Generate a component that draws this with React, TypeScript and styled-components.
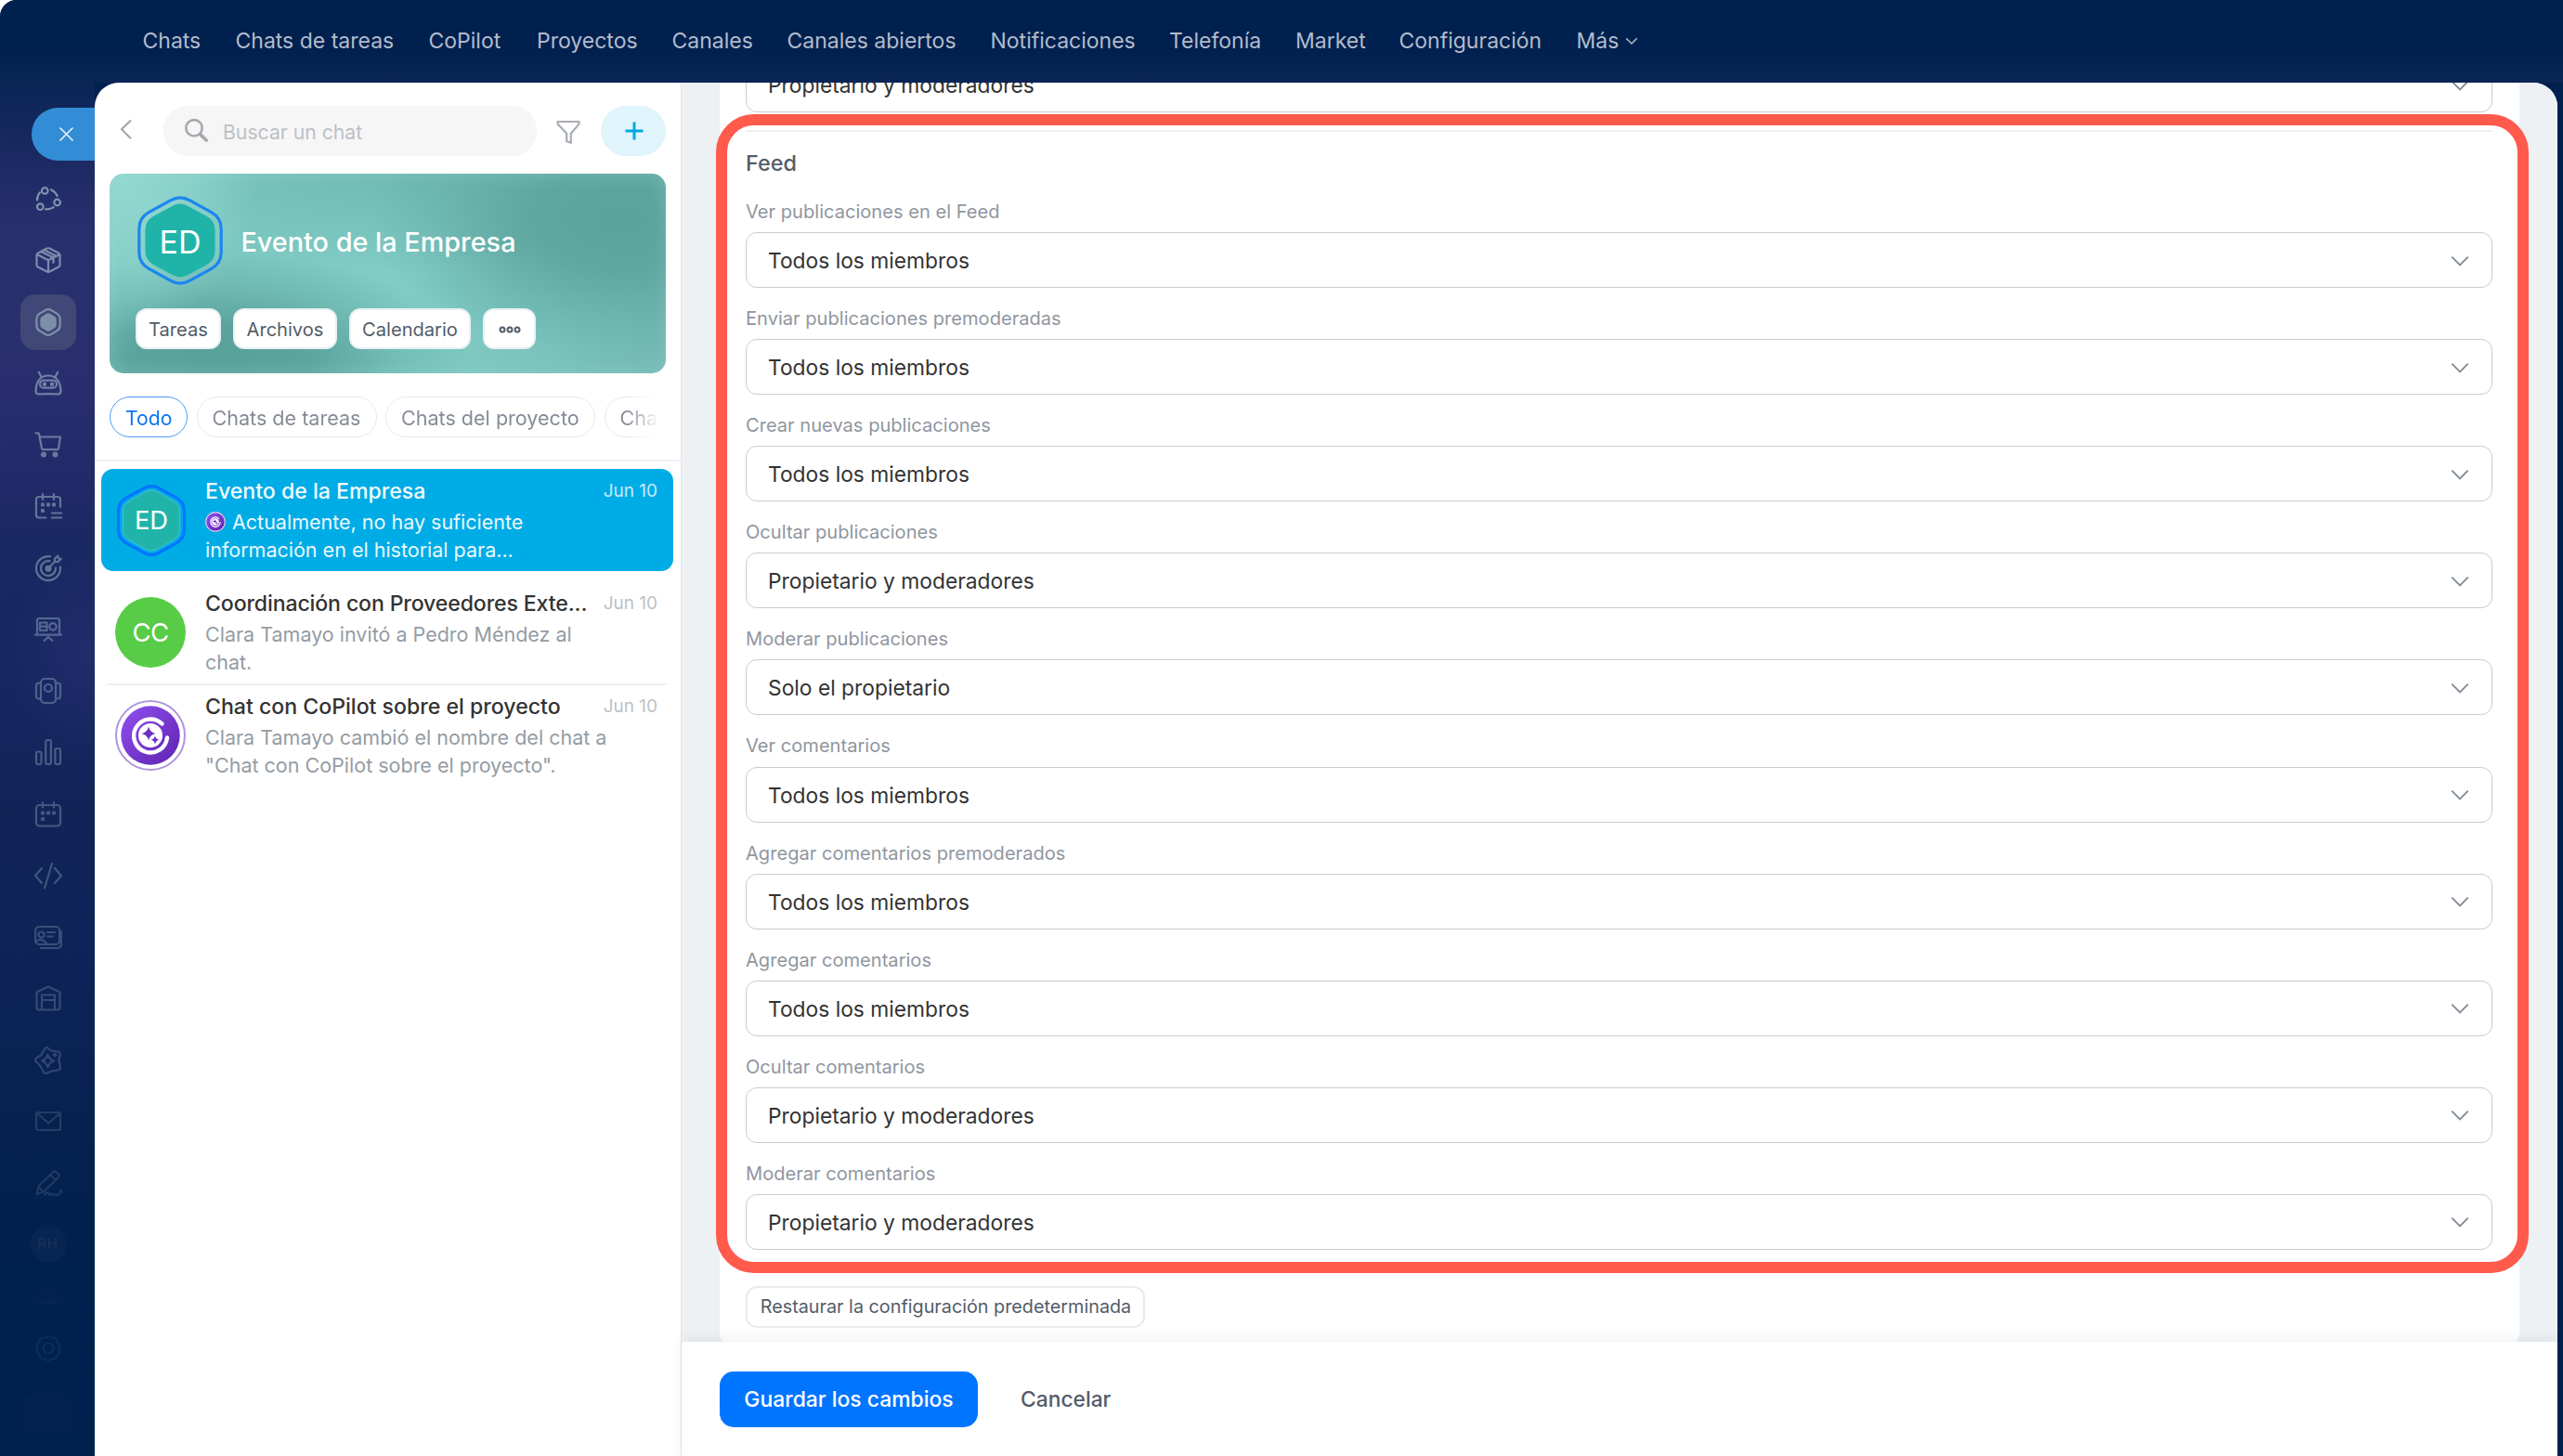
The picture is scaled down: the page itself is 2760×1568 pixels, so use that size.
import React from 'react';
import styled, { createGlobalStyle, css } from 'styled-components';

const Global = createGlobalStyle`
  *, *::before, *::after { box-sizing: border-box; }
  body { margin: 0; background: #fff; }
`;

/* ---------- shell ---------- */

const Page = styled.div`
  width: 2760px;
  height: 1568px;
  overflow: hidden;
  display: grid;
  grid-template-rows: 89px 1fr;
  border-top-left-radius: 18px;
  background: #00204f;
  font-family: Inter, 'Liberation Sans', sans-serif;
  color: #333;
`;

const TopBar = styled.nav`
  display: flex;
  align-items: center;
  padding: 0 0 2px 153.5px;
  background: linear-gradient(to bottom, #00204d 0%, #00204f 58%, #0a2556 100%);
`;

const TopLink = styled.a<{ $w?: number }>`
  display: flex;
  align-items: center;
  gap: 7px;
  flex: none;
  width: ${p => (p.$w ? `${p.$w}px` : 'auto')};
  font-size: 23px;
  line-height: 30px;
  color: #b2bccb;
  white-space: nowrap;
`;

const Body = styled.div`
  display: grid;
  grid-template-columns: 102px 2652px 6px;
  min-height: 0;
`;

/* ---------- rail ---------- */

const Rail = styled.aside`
  display: flex;
  flex-direction: column;
  padding-top: 27px;
  min-height: 0;
  overflow: hidden;
  background:
    radial-gradient(ellipse 80px 120px at 92px 620px, rgba(44, 50, 120, 0.45), rgba(44, 50, 120, 0)),
    linear-gradient(to bottom, #0a2556 0, #1d2a64 90px, #27306d 150px, #292f6e 320px, #222a6a 420px, #192961 500px, #152761 640px, #112458 780px, #0d2358 960px, #06214f 1130px, #00204e 1280px, #00204d 100%);
`;

const CloseTab = styled.button`
  align-self: flex-end;
  width: 68px;
  height: 57px;
  margin-bottom: 8px;
  padding: 0 0 0 7px;
  border: 0;
  border-radius: 29px 0 0 29px;
  background: #338cd6;
  display: flex;
  align-items: center;
  justify-content: center;
  flex: none;
`;

const Slot = styled.div<{ $fade: number }>`
  height: 66.25px;
  flex: none;
  display: flex;
  align-items: center;
  justify-content: center;
  padding-left: 1px;
  color: #a6bdcb;
  & > svg { opacity: ${p => p.$fade}; }
`;

const ActiveTile = styled.div`
  width: 60px;
  height: 60px;
  border-radius: 16px;
  background: #404877;
  display: flex;
  align-items: center;
  justify-content: center;
  & > svg { opacity: 0.6; }
`;

const Initials = styled.div`
  width: 40px;
  height: 40px;
  border-radius: 50%;
  background: #072452;
  color: #173259;
  font-size: 15.5px;
  line-height: 40px;
  text-align: center;
  letter-spacing: 0.4px;
  font-weight: 500;
  flex: none;
`;

const CutSlot = styled.div`
  height: 30px;
  flex: none;
  overflow: hidden;
  padding-top: 14px;
  display: flex;
  justify-content: center;
  opacity: 0.55;
`;

const GearSlot = styled(Slot)`
  height: 97px;
`;

const GhostTile = styled.div`
  width: 54px;
  height: 43px;
  margin-left: 24px;
  border-radius: 12px;
  background: #03224f;
  flex: none;
`;

/* ---------- chat list ---------- */

const Sheet = styled.div`
  display: grid;
  grid-template-columns: 632px 1fr;
  border-radius: 26px 26px 0 0;
  overflow: hidden;
  background: #fff;
  min-height: 0;
`;

const ListPane = styled.section`
  border-right: 1px solid #e1e5e8;
  padding-top: 25px;
  display: flex;
  flex-direction: column;
`;

const SearchRow = styled.div`
  display: flex;
  align-items: center;
  height: 54px;
  padding-left: 20px;
`;

const SearchBox = styled.div`
  display: flex;
  align-items: center;
  gap: 14px;
  width: 402px;
  height: 54px;
  margin: 0 19px 0 26px;
  padding-left: 22px;
  border-radius: 26px;
  background: #f6f6f7;
  color: #bcc0c5;
  font-size: 21.2px;
  & > span { padding-top: 2px; }
`;

const AddButton = styled.button`
  width: 70px;
  height: 54px;
  margin-left: 20px;
  padding: 0 0 0 1px;
  border: 0;
  border-radius: 27px;
  background: #dff4fb;
  display: flex;
  align-items: center;
  justify-content: center;
`;

const Hero = styled.div`
  width: 599px;
  height: 215px;
  margin: 19px 0 0 16px;
  padding: 24px 28px;
  border-radius: 15px;
  box-shadow: inset 0 0 18px rgba(160, 215, 208, 0.35);
  background:
    radial-gradient(ellipse 150px 170px at 10px 0px, rgba(150, 219, 211, 0.9), rgba(150, 219, 211, 0.55) 50%, rgba(150, 219, 211, 0)),
    radial-gradient(ellipse 270px 150px at 550px 50px, #5aa29c 0%, rgba(90, 162, 156, 0.85) 35%, rgba(90, 162, 156, 0.35) 70%, rgba(90, 162, 156, 0)),
    radial-gradient(ellipse 290px 110px at 330px -5px, rgba(97, 172, 165, 0.6), rgba(97, 172, 165, 0.3) 50%, rgba(97, 172, 165, 0)),
    radial-gradient(ellipse 270px 120px at 120px 205px, #58a09a 0%, rgba(88, 160, 154, 0.9) 35%, rgba(88, 160, 154, 0.35) 70%, rgba(88, 160, 154, 0)),
    linear-gradient(100deg, #79c3bd 0%, #82cdc7 55%, #74b9b3 100%);
`;

const HeroHead = styled.div`
  display: flex;
  align-items: center;
  gap: 20px;
  height: 96px;
  padding-left: 1.5px;
`;

const HeroTitle = styled.h1`
  margin: 0;
  padding-top: 3px;
  font-size: 28.8px;
  font-weight: 500;
  color: #fff;
`;

const HeroActions = styled.div`
  display: flex;
  gap: 13px;
  margin-top: 25px;
`;

const HeroButton = styled.button<{ $w: number }>`
  width: ${p => p.$w}px;
  height: 44px;
  padding: 1px 0 0;
  border: 2px solid #e9f1f3;
  border-radius: 12px;
  background: #fff;
  font: 400 20.1px Inter, 'Liberation Sans', sans-serif;
  color: #525c69;
  display: flex;
  align-items: center;
  justify-content: center;
`;

const Tabs = styled.div`
  display: flex;
  gap: 9.5px;
  width: 592px;
  margin: 25px 0 0 16px;
  overflow: hidden;
  mask-image: linear-gradient(to right, #000 556px, transparent 592px);
`;

const Tab = styled.button<{ $w: number; $on?: boolean }>`
  flex: none;
  width: ${p => p.$w}px;
  height: 44px;
  padding: 1px 0 0 16px;
  border: 1.5px solid ${p => (p.$on ? '#4b9bf5' : '#e8eaed')};
  border-radius: 22px;
  background: #fff;
  color: ${p => (p.$on ? '#0f75f0' : '#858c96')};
  font: 400 ${p => (p.$on ? 21.2 : 21.55)}px Inter, 'Liberation Sans', sans-serif;
  text-align: left;
`;

const PaneRule = styled.div`
  height: 2px;
  margin: 24px 0 8px;
  background: #f0f0f3;
`;

const ChatRow = styled.article<{ $active?: boolean }>`
  display: flex;
  align-items: center;
  height: 110px;
  width: 616px;
  margin-left: 7px;
  padding: 0 17px 0 15px;
  border-radius: 13px;
  ${p => p.$active && css`
    background: #00ace6;
    margin-bottom: 11px;
  `}
  --title: ${p => (p.$active ? '#f4fcff' : '#333')};
  --message: ${p => (p.$active ? '#e9f8fd' : '#959ca4')};
  --date: ${p => (p.$active ? '#c5ebf9' : '#bdc1c6')};
`;

const AvatarBox = styled.div`
  width: 76px;
  height: 76px;
  margin-right: 21px;
  flex: none;
  display: flex;
  align-items: center;
  justify-content: center;
`;

const HexBox = styled(AvatarBox)`
  padding-left: 2px;
`;

const RoundAvatar = styled(AvatarBox)`
  border-radius: 50%;
  background: #58cc47;
  color: #fff;
  font-size: 27.5px;
  letter-spacing: -0.5px;
`;

const RowText = styled.div`
  flex: 1;
  min-width: 0;
  padding-top: 1px;
`;

const RowHead = styled.div`
  display: flex;
  justify-content: space-between;
  align-items: center;
  height: 30px;
  margin-bottom: 3.5px;
`;

const RowTitle = styled.h2<{ $tight?: boolean }>`
  margin: 0;
  font-size: 23.1px;
  font-weight: 500;
  line-height: 30px;
  letter-spacing: ${p => (p.$tight ? '-0.13px' : '0')};
  white-space: nowrap;
  color: var(--title);
`;

const RowDate = styled.time`
  font-size: 19px;
  line-height: 28px;
  color: var(--date);
`;

const Message = styled.p`
  margin: 0;
  font-size: 21.5px;
  line-height: 30px;
  color: var(--message);
  white-space: nowrap;
`;

const MessageLine = styled.span`
  display: flex;
  align-items: center;
  gap: 7px;
`;

const RowRule = styled.div`
  height: 2px;
  width: 602px;
  margin: 0 0 -1px 14px;
  background: #efefef;
`;

/* ---------- settings ---------- */

const Main = styled.main`
  display: flex;
  flex-direction: column;
  min-height: 0;
`;

const Scroll = styled.div`
  position: relative;
  height: 1356px;
  flex: none;
  overflow: hidden;
  padding-left: 41px;
  background: #edf1f4;
`;

const Card = styled.div`
  width: 1938px;
  height: 1387px;
  margin-top: -28px;
  padding: 0 29px 0 28px;
  border-radius: 12px;
  background: #fff;
`;

const SelectBox = styled.div`
  display: flex;
  align-items: center;
  justify-content: space-between;
  height: 60px;
  padding: 1px 22px 0 23px;
  border: 1.5px solid #c8cbcf;
  border-radius: 12px;
  background: #fff;
  font-size: 22.8px;
  color: #333;
`;

const SectionRule = styled.div`
  height: 2px;
  margin: 19px 0;
  background: #efefef;
`;

const SectionTitle = styled.h3`
  margin: 0 0 25px;
  font-size: 23.4px;
  line-height: 30px;
  font-weight: 500;
  color: #525c69;
`;

const Field = styled.div`
  margin-bottom: 21px;
`;

const FieldLabel = styled.label`
  display: block;
  margin-bottom: 10.1px;
  font-size: 20.1px;
  line-height: 24px;
  color: #8f969f;
`;

const ResetButton = styled.button`
  width: 430px;
  height: 45px;
  margin-top: 18px;
  padding: 0 0 0 1px;
  border: 2px solid #e9ebed;
  border-radius: 12px;
  background: #fff;
  font: 400 19.8px Inter, 'Liberation Sans', sans-serif;
  color: #525c69;
`;

const Highlight = styled.div`
  position: absolute;
  left: 37px;
  top: 34px;
  width: 1952px;
  height: 1248px;
  border: 12px solid #ff5a4c;
  border-radius: 41px;
`;

const Footer = styled.footer`
  position: relative;
  flex: 1;
  display: flex;
  align-items: center;
  padding-left: 41px;
  gap: 46px;
  background: #fff;
  box-shadow: 0 -2px 14px rgba(60, 70, 80, 0.09);
`;

const SaveButton = styled.button`
  width: 278px;
  height: 60px;
  padding: 0;
  border: 0;
  border-radius: 15px;
  background: #0075ff;
  color: #fff;
  font: 500 22.9px Inter, 'Liberation Sans', sans-serif;
`;

const CancelButton = styled.button`
  padding: 0;
  border: 0;
  background: none;
  color: #525c69;
  font: 500 22.8px Inter, 'Liberation Sans', sans-serif;
`;

/* ---------- drawings ---------- */

function hexPath(cx: number, cy: number, w: number, r: number, d: number) {
  const pts = [[0, -r], [w, -r / 2], [w, r / 2], [0, r], [-w, r / 2], [-w, -r / 2]].map(([x, y]) => [cx + x, cy + y]);
  const toward = (a: number[], b: number[]) => {
    const l = Math.hypot(b[0] - a[0], b[1] - a[1]);
    return `${a[0] + ((b[0] - a[0]) * d) / l} ${a[1] + ((b[1] - a[1]) * d) / l}`;
  };
  return pts.map((p, i) => {
    const prev = pts[(i + 5) % 6];
    const next = pts[(i + 1) % 6];
    return `${i ? 'L' : 'M'}${toward(p, prev)}Q${p[0]} ${p[1]} ${toward(p, next)}`;
  }).join('') + 'Z';
}

const HexAvatar = ({ small }: { small?: boolean }) => (
  <svg width={small ? 74 : 92} height={small ? 77 : 96} viewBox="0 0 92 96">
    <path d={hexPath(46, 48, 44.2, 49, 12)} fill="none" stroke={small ? '#0075ff' : '#1a86f0'} strokeWidth={small ? 4 : 3.2} />
    <path d={hexPath(46, 48, small ? 38.2 : 37.6, small ? 43 : 42, 10)} fill="#20b4a9" stroke={small ? '#5cc4cf' : 'none'} strokeWidth="1" />
    <text x="46" y={small ? 60 : 61.5} textAnchor="middle" fill="#fff" fontSize="34" fontFamily="Inter, sans-serif">ED</text>
  </svg>
);

const CopilotMark = ({ size }: { size: number }) => (
  <svg width={size} height={size} viewBox="0 0 76 76">
    <defs>
      <linearGradient id={`cp${size}`} x1="0" y1="0" x2="1" y2="1">
        <stop offset="0" stopColor="#9050ee" />
        <stop offset="1" stopColor="#5f23b0" />
      </linearGradient>
    </defs>
    <circle cx="38" cy="38" r="37" fill="#fff" stroke="#b096dc" strokeWidth="2" />
    <circle cx="38" cy="38" r={size < 30 ? 34 : 31.7} fill={`url(#cp${size})`} />
    <path d="M50.5 25.4A18 18 0 1 0 56 40.5" fill="none" stroke="#fff" strokeWidth="4.4" strokeLinecap="round" />
    <circle cx="38" cy="38" r="13" fill="#fff" />
    <path d="M36 28.5q1.3 6.2 7.5 7.5q-6.2 1.3-7.5 7.5q-1.3-6.2-7.5-7.5q6.2-1.3 7.5-7.5zM43 38.3q.8 3.7 4.6 4.5q-3.8.8-4.6 4.6q-.8-3.8-4.6-4.6q3.8-.8 4.6-4.5z" fill="#6d30c4" />
  </svg>
);

const Glyph = ({ children }: { children: React.ReactNode }) => (
  <svg width="30" height="30" viewBox="0 0 30 30" fill="none" stroke="currentColor" strokeWidth="2.2" strokeLinecap="round" strokeLinejoin="round">
    {children}
  </svg>
);

const Chevron = () => (
  <svg width="24" height="24" viewBox="0 0 24 24" fill="none" stroke="#828b95" strokeWidth="1.9">
    <path d="M3.3 7.6l8.7 8.7l8.7-8.7" />
  </svg>
);

const dots = (pts: number[][]) => pts.map(([x, y]) => <rect key={`${x}-${y}`} x={x - 2} y={y - 2} width="4" height="4" rx="1" fill="currentColor" stroke="none" />);

const railIcons: [number, React.ReactNode][] = [
  [0.7, <>
    <circle cx="11.3" cy="6.4" r="3.3" /><circle cx="24.6" cy="19" r="3.3" /><circle cx="6.3" cy="23.7" r="3.3" />
    <path d="M3 16.5Q3 11.5 6 8.3M18 5.2Q22.5 7.3 24.7 12M12 26.3Q17 26.8 20.7 24.2" />
  </>],
  [0.66, <>
    <path d="M13.6 2.6q1.4-.7 2.8 0l9.7 5q1.4.8 1.4 2.2v10.6q0 1.4-1.4 2.2l-9.7 5q-1.4.7-2.8 0l-9.7-5q-1.4-.8-1.4-2.2V9.8q0-1.4 1.4-2.2z" />
    <path d="M3 9l12 6.300l12-6.300M15 15.300V28M7.300 6l13.200 6.600v5.200M10.700 4.200L24 11" />
  </>],
  [-1, <>
    <path d={hexPath(15, 15, 12.6, 14.8, 4)} />
    <path d={hexPath(15, 15, 7.6, 9, 1.6)} fill="currentColor" />
  </>],
  [0.58, <>
    <path d="M1.600 23.500C1.600 13 6.500 6.500 15 6.500S28.400 13 28.400 23.500q0 3-3.200 3q-10.200-.9-20.400 0q-3.200 0-3.200-3zM4.800 2.800l2.600 5M25.200 2.800l-2.600 5" />
    <rect x="6" y="11.700" width="18" height="8" rx="4" />
    {dots([[11, 15.700], [19, 15.700]])}
  </>],
  [0.54, <>
    <path d="M1.500 2.300h2.300q1 0 1.200 1l3 15.700q.2 1.200 1.400 1.200h15.200q1.200 0 1.400-1.200l2-12.500H5.500" />
    <circle cx="10" cy="25.600" r="1.900" fill="currentColor" /><circle cx="22.400" cy="25.600" r="1.900" fill="currentColor" />
  </>],
  [0.5, <>
    <path d="M12.500 27.500H5q-3 0-3-3V8q0-3 3-3h20q3 0 3 3v8M9 2v6M21 2v6M19 22.500h10.500M19 27.500h10.500" />
    {dots([[9, 13.500], [15, 13.500], [21, 13.500], [9, 20]])}
  </>],
  [0.5, <>
    <path d="M17 2.200A13 13 0 1 0 27.900 13.500M16.500 7.200A8 8 0 1 0 23 14.500M15 15l7.500-7.500M22 8V4.500L25.300 1.600l.6 2.700l2.700.6L25.500 8z" />
    <circle cx="15" cy="15.200" r="2.400" fill="currentColor" />
  </>],
  [0.42, <>
    <path d="M3 20.500V5q0-2 2-2h20q2 0 2 2v15.500M1 20.700h28M10.500 27l4.500-4l4.500 4" />
    <rect x="6" y="7.500" width="7.500" height="8.500" /><path d="M6 11.700h7.500" /><circle cx="20" cy="11.800" r="3.700" />
  </>],
  [0.38, <>
    <rect x="7" y="2" width="16" height="26" rx="4" /><circle cx="15" cy="12" r="4" />
    <path d="M7 6.500H5q-3 0-3 3v11q0 3 3 3h2M23 6.500h2q3 0 3 3v11q0 3-3 3h-2" />
  </>],
  [0.36, <>
    <rect x="2" y="14.500" width="5.500" height="13.500" rx="2" /><rect x="12.200" y="2" width="5.700" height="26" rx="2" /><rect x="22.400" y="11" width="5.600" height="17" rx="2" />
  </>],
  [0.34, <>
    <rect x="2" y="5" width="26" height="22.500" rx="3.500" /><path d="M9 2v5.500M21 2v5.500" />
    {dots([[9, 13.500], [15, 13.500], [21, 13.500], [9, 20]])}
  </>],
  [0.32, <path d="M8 7l-7 8l7 8M22 7l7 8l-7 8M19 2l-8 26.500" />],
  [0.28, <>
    <rect x="1.100" y="4" width="26" height="19" rx="4" /><path d="M28.900 9v13.500q0 4.500-4.500 4.500H7" />
    <circle cx="7.500" cy="12.500" r="3" /><path d="M1.500 20q6-5 12 2.500M14 10h8M14 14.500h5.500" />
  </>],
  [0.26, <>
    <path d="M2.500 8.500L15 2.500l12.500 6V25q0 2.500-2.500 2.500H5q-2.500 0-2.500-2.500z" /><path d="M8 27V11.500h14V27M8 17h14" />
  </>],
  [0.24, <>
    <path d="M12 1.500q1.500-1 3 .5l3 2.500l7.500 1q2.500.5 2.300 3L26.500 14l1.500 9q0 2.500-3 2.500l-7 1.200l-5 2.300q-2.500.5-3-2L6 20.500L1.600 16q-1.500-2 .3-3.500L7 9.500z" />
    <path d="M14.500 8.500q1.500 5.500 6.500 7q-5 1.500-6.500 7q-1.500-5.500-6.500-7q5-1.500 6.500-7zM22 7.500v3M20.500 9h3" />
  </>],
  [0.18, <><rect x="2" y="5" width="26" height="19" rx="2" /><path d="M3 6l12.200 10.500L27.500 6" /></>],
  [0.16, <path d="M2.500 27l2-8.500L20.500 2.800q1.500-1 3 .3l2.500 2.700q1.300 1.400 0 3L10 24.500zM17.500 6.500l5.500 5.700M11 27.500q3-3.500 4.500-1.500q0 3 3.500.5q3 2.500 7 1q5-2 1.500-5M4.500 19l5 5.500" />],
];

/* ---------- data ---------- */

const topLinks: [string, number][] = [
  ['Chats', 100],
  ['Chats de tareas', 208],
  ['CoPilot', 116.5],
  ['Proyectos', 145.5],
  ['Canales', 124],
  ['Canales abiertos', 219],
  ['Notificaciones', 192.5],
  ['Telefonía', 136],
  ['Market', 111.5],
  ['Configuración', 191],
];

const fields: [string, string][] = [
  ['Ver publicaciones en el Feed', 'Todos los miembros'],
  ['Enviar publicaciones premoderadas', 'Todos los miembros'],
  ['Crear nuevas publicaciones', 'Todos los miembros'],
  ['Ocultar publicaciones', 'Propietario y moderadores'],
  ['Moderar publicaciones', 'Solo el propietario'],
  ['Ver comentarios', 'Todos los miembros'],
  ['Agregar comentarios premoderados', 'Todos los miembros'],
  ['Agregar comentarios', 'Todos los miembros'],
  ['Ocultar comentarios', 'Propietario y moderadores'],
  ['Moderar comentarios', 'Propietario y moderadores'],
];

function Select({ value }: { value: string }) {
  return <SelectBox><span>{value}</span><Chevron /></SelectBox>;
}

export default function App() {
  return (
    <Page>
      <Global />
      <TopBar>
        {topLinks.map(([t, w]) => <TopLink key={t} $w={w}>{t}</TopLink>)}
        <TopLink>
          Más
          <svg width="14" height="10" viewBox="0 0 14 10" fill="none" stroke="currentColor" strokeWidth="1.5"><path d="M1.200 2.200L7 8l5.800-5.800" /></svg>
        </TopLink>
      </TopBar>
      <Body>
        <Rail>
          <CloseTab>
            <svg width="17" height="17" viewBox="0 0 17 17" stroke="#e6f1fa" strokeWidth="1.7"><path d="M1.500 1.500l14 14M15.500 1.500l-14 14" /></svg>
          </CloseTab>
          {railIcons.map(([fade, icon], i) => (
            <Slot key={i} $fade={fade}>
              {fade < 0 ? <ActiveTile><Glyph>{icon}</Glyph></ActiveTile> : <Glyph>{icon}</Glyph>}
            </Slot>
          ))}
          <Slot $fade={1}><Initials>RH</Initials></Slot>
          <CutSlot><Initials>BP</Initials></CutSlot>
          <GearSlot $fade={0.08}>
            <Glyph>
              <path d="M12.500 3.200q2.500-2.800 5 0q1 1.100 2.600.6q3.500-.6 3.900 2.800q0 1.500 1.400 2.300q3.300 1.600 1.500 4.500q-.9 1.600 0 3.200q1.800 2.900-1.500 4.500q-1.400.8-1.400 2.300q-.4 3.400-3.900 2.800q-1.600-.5-2.600.6q-2.500 2.800-5 0q-1-1.100-2.600-.6q-3.500.6-3.900-2.800q0-1.500-1.400-2.300q-3.300-1.600-1.500-4.500q.9-1.600 0-3.200q-1.800-2.900 1.500-4.500q1.400-.8 1.400-2.300q.4-3.400 3.900-2.800q1.600.5 2.600-.6z" />
              <circle cx="15" cy="15" r="5.500" />
            </Glyph>
          </GearSlot>
          <GhostTile />
        </Rail>

        <Sheet>
          <ListPane>
            <SearchRow>
              <svg width="28" height="28" viewBox="0 0 28 28" fill="none" stroke="#a3a8ae" strokeWidth="2.200"><path d="M19 2.500L9 12.300L19 22.200" /></svg>
              <SearchBox>
                <svg width="28" height="28" viewBox="0 0 28 28" fill="none" stroke="#a5a9ae" strokeWidth="2.600" strokeLinecap="round">
                  <circle cx="11" cy="10.800" r="8.700" /><path d="M17.800 17.800l6.400 6.200" strokeWidth="3.800" />
                </svg>
                <span>Buscar un chat</span>
              </SearchBox>
              <svg width="30" height="30" viewBox="0 0 30 30" fill="none" stroke="#a8adb4" strokeWidth="2.200" strokeLinejoin="round">
                <path d="M3.500 5h23v2.600l-8.700 10.200v10l-4.600-1.500v-8.500L3.500 7.600z" />
              </svg>
              <AddButton>
                <svg width="20" height="20" viewBox="0 0 20 20" stroke="#00a8e1" strokeWidth="3"><path d="M10 .5v19M.5 10h19" /></svg>
              </AddButton>
            </SearchRow>

            <Hero>
              <HeroHead>
                <HexAvatar />
                <HeroTitle>Evento de la Empresa</HeroTitle>
              </HeroHead>
              <HeroActions>
                <HeroButton $w={92}>Tareas</HeroButton>
                <HeroButton $w={112}>Archivos</HeroButton>
                <HeroButton $w={131}>Calendario</HeroButton>
                <HeroButton $w={57}>
                  <svg width="24" height="8" viewBox="0 0 24 8" fill="none" stroke="#525c69" strokeWidth="2">
                    <circle cx="4" cy="4" r="2.500" /><circle cx="12" cy="4" r="2.500" /><circle cx="20" cy="4" r="2.500" />
                  </svg>
                </HeroButton>
              </HeroActions>
            </Hero>

            <Tabs>
              <Tab $w={84} $on>Todo</Tab>
              <Tab $w={194}>Chats de tareas</Tab>
              <Tab $w={226}>Chats del proyecto</Tab>
              <Tab $w={120}>Chats</Tab>
            </Tabs>

            <PaneRule />

            <ChatRow $active>
              <HexBox><HexAvatar small /></HexBox>
              <RowText>
                <RowHead><RowTitle>Evento de la Empresa</RowTitle><RowDate>Jun 10</RowDate></RowHead>
                <Message>
                  <MessageLine><CopilotMark size={22} />Actualmente, no hay suficiente</MessageLine>
                  información en el historial para...
                </Message>
              </RowText>
            </ChatRow>
            <ChatRow>
              <RoundAvatar>CC</RoundAvatar>
              <RowText>
                <RowHead><RowTitle $tight>Coordinación con Proveedores Exte...</RowTitle><RowDate>Jun 10</RowDate></RowHead>
                <Message>Clara Tamayo invitó a Pedro Méndez al<br />chat.</Message>
              </RowText>
            </ChatRow>
            <RowRule />
            <ChatRow>
              <AvatarBox><CopilotMark size={76} /></AvatarBox>
              <RowText>
                <RowHead><RowTitle>Chat con CoPilot sobre el proyecto</RowTitle><RowDate>Jun 10</RowDate></RowHead>
                <Message>Clara Tamayo cambió el nombre del chat a<br />"Chat con CoPilot sobre el proyecto".</Message>
              </RowText>
            </ChatRow>
          </ListPane>

          <Main>
            <Scroll>
              <Card>
                <Select value="Propietario y moderadores" />
                <SectionRule />
                <SectionTitle>Feed</SectionTitle>
                {fields.map(([label, value]) => (
                  <Field key={label}>
                    <FieldLabel>{label}</FieldLabel>
                    <Select value={value} />
                  </Field>
                ))}
                <ResetButton>Restaurar la configuración predeterminada</ResetButton>
              </Card>
              <Highlight />
            </Scroll>
            <Footer>
              <SaveButton>Guardar los cambios</SaveButton>
              <CancelButton>Cancelar</CancelButton>
            </Footer>
          </Main>
        </Sheet>
      </Body>
    </Page>
  );
}
